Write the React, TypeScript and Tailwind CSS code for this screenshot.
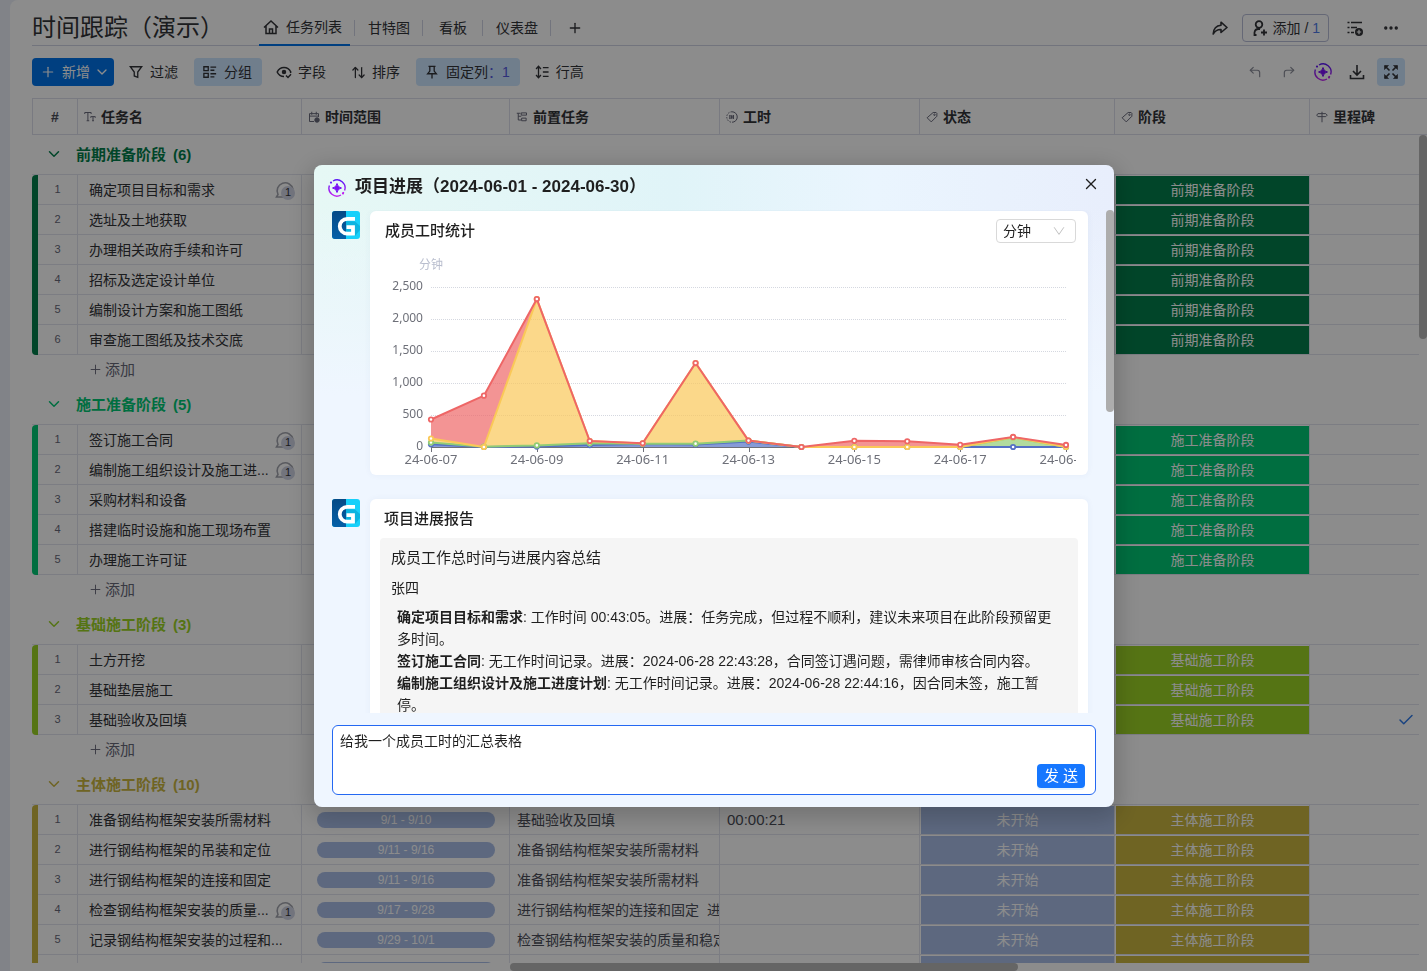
import { type ReactNode } from 'react';
import { ArrowUpDown, Check, ChevronDown, CornerUpLeft, CornerUpRight, Ellipsis, Pin, Plus, X } from 'lucide-react';

type Task = {
    name?: string;
    comments?: number;
    range?: string;
    previous?: string[];
    time?: string;
    status?: string;
    milestone?: boolean;
};

type Group = {
    title: string;
    count: number;
    text: string;
    bg: string;
    tasks: Task[];
};

const groups: Group[] = [
    {
        title: '前期准备阶段',
        count: 6,
        text: 'text-[#037f4c]',
        bg: 'bg-[#037f4c]',
        tasks: [
            { name: '确定项目目标和需求', comments: 1 },
            { name: '选址及土地获取' },
            { name: '办理相关政府手续和许可' },
            { name: '招标及选定设计单位' },
            { name: '编制设计方案和施工图纸' },
            { name: '审查施工图纸及技术交底' },
        ],
    },
    {
        title: '施工准备阶段',
        count: 5,
        text: 'text-[#00c875]',
        bg: 'bg-[#00c875]',
        tasks: [
            { name: '签订施工合同', comments: 1 },
            { name: '编制施工组织设计及施工进...', comments: 1 },
            { name: '采购材料和设备' },
            { name: '搭建临时设施和施工现场布置' },
            { name: '办理施工许可证' },
        ],
    },
    {
        title: '基础施工阶段',
        count: 3,
        text: 'text-[#9cd326]',
        bg: 'bg-[#9cd326]',
        tasks: [
            { name: '土方开挖' },
            { name: '基础垫层施工' },
            { name: '基础验收及回填', milestone: true },
        ],
    },
    {
        title: '主体施工阶段',
        count: 10,
        text: 'text-[#cab641]',
        bg: 'bg-[#cab641]',
        tasks: [
            { name: '准备钢结构框架安装所需材料', range: '9/1 - 9/10', previous: ['基础验收及回填'], time: '00:00:21', status: '未开始' },
            { name: '进行钢结构框架的吊装和定位', range: '9/11 - 9/16', previous: ['准备钢结构框架安装所需材料'], status: '未开始' },
            { name: '进行钢结构框架的连接和固定', range: '9/11 - 9/16', previous: ['准备钢结构框架安装所需材料'], status: '未开始' },
            { name: '检查钢结构框架安装的质量...', comments: 1, range: '9/17 - 9/28', previous: ['进行钢结构框架的连接和固定', '进行钢结构框架的吊装和定位'], status: '未开始' },
            { name: '记录钢结构框架安装的过程和...', range: '9/29 - 10/1', previous: ['检查钢结构框架安装的质量和稳定性'], status: '未开始' },
            { range: ' ', status: ' ' },
        ],
    },
];

const days = ['24-06-07', '24-06-09', '24-06-11', '24-06-13', '24-06-15', '24-06-17', '24-06-19'];

const series = [
    { color: '#5470c6', values: [42, 0, 6, 30, 45, 40, 85, 0, 0, 0, 0, 0, 0] },
    { color: '#91cc75', values: [70, 5, 25, 60, 52, 52, 100, 0, 0, 0, 0, 150, 0] },
    { color: '#fac858', values: [133, 0, 2310, 92, 56, 1310, 100, 0, 0, 0, 0, 152, 0] },
    { color: '#ee6666', values: [430, 802, 2312, 94, 58, 1312, 100, 0, 96, 88, 35, 157, 32] },
];

function Icon({ size = 14, width = 16, stroke = 1.5, className = '', children }: { size?: number; width?: number; stroke?: number; className?: string; children: ReactNode }) {
    return (
        <svg
            width={size}
            height={size}
            viewBox={`0 0 ${width} ${width}`}
            fill="none"
            stroke="currentColor"
            strokeWidth={stroke}
            className={`shrink-0 ${className}`}
            aria-hidden="true"
        >
            {children}
        </svg>
    );
}

function HomeIcon() {
    return (
        <Icon size={16}>
            <path d="M1 8.5 8 2l7 6.5M3 7v7.5h10V7M6.5 14.5V10h3v4.5" />
        </Icon>
    );
}

function SparkIcon() {
    return (
        <svg width="18" height="18" viewBox="0 0 18 18" fill="none" className="shrink-0" aria-hidden="true">
            <defs>
                <linearGradient id="spark" x1="0" y1="0" x2="0" y2="1">
                    <stop offset="0" stopColor="#5b16f5" />
                    <stop offset="1" stopColor="#c026f0" />
                </linearGradient>
            </defs>
            <path d="M5 2A8 8 0 0 1 16.600 11.500M15.800 13.200a8 8 0 0 1-1.200 1.500M13 16A8 8 0 0 1 1.400 6.500" stroke="url(#spark)" strokeWidth="1.400" />
            <circle cx="3" cy="3.600" r="1.100" fill="#6a1af5" />
            <circle cx="15" cy="14.400" r="1.100" fill="#c026f0" />
            <path d="M9 4.500Q9.600 8.400 13.500 9 9.600 9.600 9 13.500 8.400 9.600 4.500 9 8.400 8.400 9 4.500z" fill="#7a12f5" stroke="#7a12f5" strokeWidth="1" />
        </svg>
    );
}

function Logo() {
    return (
        <svg viewBox="0 0 28 28" className="size-7 shrink-0" aria-hidden="true">
            <defs>
                <clipPath id="logo-clip">
                    <rect width="28" height="28" rx="3" />
                </clipPath>
                <linearGradient id="logo-dark" x1="0" y1="0" x2="0" y2="1">
                    <stop offset="0" stopColor="#064a86" />
                    <stop offset="1" stopColor="#0560a8" />
                </linearGradient>
            </defs>
            <g clipPath="url(#logo-clip)">
                <rect width="28" height="28" fill="#17d0fa" />
                <path d="M23 10.500 28 15v4l-5 6-9-3V10z" fill="#0cb4e0" />
                <rect width="14" height="28" fill="url(#logo-dark)" />
                <path d="M23 7.800H15.200a7.400 7.400 0 0 0 0 14.900H21V16.200h-6.500" fill="none" stroke="#fff" strokeWidth="3.800" />
            </g>
        </svg>
    );
}

const tagIcon = (
    <>
        <path d="M9.500 2h4l1 1v4L7 14.500 1.500 9z" />
        <circle cx="11.300" cy="5" r="1" />
    </>
);

const columns = [
    {
        title: '任务名',
        icon: <path d="M1 4V2h8.500v2M5.200 2v11M3.500 13h3.500M9 9V7.500h6V9M12 7.500V13M10.800 13h2.500" />,
    },
    {
        title: '时间范围',
        icon: (
            <>
                <path d="M8 14H2V3.500h12V8M2 6.800h12M5 1v4M11 1v4" />
                <circle cx="12" cy="12" r="3" fill="currentColor" />
            </>
        ),
    },
    {
        title: '前置任务',
        icon: <path d="M1 3h5M3 3v9h4M3 7h4M7 2.500h7v3H7zM7.500 9.500h6v3.500h-6z" />,
    },
    {
        title: '工时',
        icon: (
            <>
                <path d="M8 1a7 7 0 0 1 0 14" />
                <path d="M8 1a7 7 0 0 0 0 14" strokeDasharray="2 1.600" />
                <path d="M5 5.500v5M7.500 5.500v5M10 5.500v5M5 5.500l5 5M5 10.500l5-5" />
            </>
        ),
    },
    { title: '状态', icon: tagIcon },
    { title: '阶段', icon: tagIcon },
    {
        title: '里程碑',
        icon: <path d="M8 1v14M2.500 3.500H13l2 2-2 2H2.500L1 5.500z" />,
    },
];

function ToolButton({ icon, active, children }: { icon: ReactNode; active?: boolean; children: ReactNode }) {
    return (
        <button className={`flex h-7 shrink-0 items-center gap-1.5 rounded pl-2 pr-2.5 ${active ? 'bg-[#cce5ff]' : ''}`}>
            <span className="flex w-4 justify-center">{icon}</span>
            {children}
        </button>
    );
}

function IconButton({ label, className = '', children }: { label: string; className?: string; children: ReactNode }) {
    return (
        <button aria-label={label} className={`flex size-7 shrink-0 items-center justify-center rounded ${className}`}>
            {children}
        </button>
    );
}

function Header() {
    return (
        <header className="ml-[22px] flex h-[46px] shrink-0 items-center border-b border-[#d0d4e4] pt-2.5">
            <h1 className="mr-[35px] w-48 shrink-0 text-2xl leading-9">时间跟踪（演示）</h1>
            <nav className="flex h-9 items-center">
                <a href="#list" className="flex h-9 items-center gap-[7px] border-b-2 border-[#0073ea] pl-1 pr-2">
                    <HomeIcon />
                    任务列表
                </a>
                <a href="#gantt" className="ml-1 border-l border-[#d0d4e4] pl-[13px] pr-3 leading-4">甘特图</a>
                <a href="#board" className="border-l border-[#d0d4e4] pl-4 pr-[15px] leading-4">看板</a>
                <a href="#dashboard" className="border-x border-[#d0d4e4] pl-[13px] pr-3 leading-4">仪表盘</a>
                <IconButton label="添加视图" className="ml-2.5">
                    <Plus size={16} />
                </IconButton>
            </nav>
            <div className="ml-auto flex items-center gap-2 pr-[22px]">
                <IconButton label="分享">
                    <Icon size={16} stroke={1.600}>
                        <path d="M9 2.200 15 7.500 9 12.500V9.500C5.500 9.300 3 11 1.200 14 1.500 9 4 5.500 9 5.200z" strokeLinejoin="round" />
                    </Icon>
                </IconButton>
                <button className="flex h-7 shrink-0 items-center gap-1 rounded border border-[#b8bdd8] px-2">
                    <Icon size={18} width={18} stroke={1.800}>
                        <circle cx="8" cy="5.500" r="3.300" />
                        <path d="M5.500 16H3.500v-2.500a4 4 0 0 1 4-3.500h1.500M13 10.500v6M10 13.500h6" />
                    </Icon>
                    <span>
                        添加 / <span className="text-[#4f7be8]">1</span>
                    </span>
                </button>
                <IconButton label="列表设置" className="ml-1">
                    <Icon size={18} width={18} stroke={1.600}>
                        <path d="M1.500 3.500h2M5 3.500h11M1.500 8.500h2M5 8.500h6M1.500 13.500h2M5 13.500h3" />
                        <circle cx="13" cy="13" r="4" fill="currentColor" stroke="none" />
                        <path d="M13 10.800v4.400M10.800 13h4.400" stroke="#fff" strokeWidth="1.200" />
                    </Icon>
                </IconButton>
                <IconButton label="更多">
                    <Ellipsis size={18} strokeWidth={2.500} />
                </IconButton>
            </div>
        </header>
    );
}

function Toolbar() {
    return (
        <div className="ml-[22px] mt-3 flex h-7 shrink-0 items-center gap-1.5 pr-[22px]">
            <button className="flex h-7 w-[82px] shrink-0 items-center rounded bg-[#0073ea] pl-2 text-white">
                <Plus size={16} strokeWidth={1.800} className="mr-1.5" />
                新增
                <ChevronDown size={16} className="ml-1" />
            </button>
            <ToolButton
                icon={
                    <Icon>
                        <path d="M1.500 2h13l-4.500 6v6l-4-1.500V8z" />
                    </Icon>
                }
            >
                过滤
            </ToolButton>
            <ToolButton
                active
                icon={
                    <Icon>
                        <path d="M1 2h5v4.500H1zM1 9.500h5V14H1zM8.500 2.500H15M8.500 6H13M8.500 10H15M8.500 13.500H13" />
                    </Icon>
                }
            >
                分组
            </ToolButton>
            <ToolButton
                icon={
                    <Icon size={16}>
                        <path d="M8 12.500C4.500 12.500 2.300 10.500 1.200 8 2.500 5.300 5 3.500 8 3.500s5.500 1.800 6.800 4.500l-.5 1" />
                        <circle cx="8" cy="8" r="1.500" fill="currentColor" />
                        <path d="M10 11.500l2 2 3-3.200" />
                    </Icon>
                }
            >
                字段
            </ToolButton>
            <ToolButton icon={<ArrowUpDown size={15} />}>排序</ToolButton>
            <ToolButton
                active
                icon={
                    <Icon size={14}>
                        <path d="M4 1.500h8M5.500 1.500V7L3 10h10l-2.500-3V1.500M8 10v5.500" />
                    </Icon>
                }
            >
                <span>
                    固定列<span className="text-[#5559df]">：1</span>
                </span>
            </ToolButton>
            <ToolButton
                icon={
                    <Icon>
                        <path d="M4 1.500v13M1.200 4.500 4 1.500l2.800 3M1.200 11.500l2.800 3 2.800-3M9 3h6.500M9 8h6.500M9 13h6.500" />
                    </Icon>
                }
            >
                行高
            </ToolButton>
            <div className="ml-auto flex items-center gap-1.5">
                <IconButton label="撤销" className="text-[#8b8d99]">
                    <CornerUpLeft size={14} />
                </IconButton>
                <IconButton label="重做" className="text-[#8b8d99]">
                    <CornerUpRight size={14} />
                </IconButton>
                <IconButton label="智能助手">
                    <SparkIcon />
                </IconButton>
                <IconButton label="下载">
                    <Icon size={16} stroke={1.600}>
                        <path d="M8 1v9.500M4 7l4 4 4-4M1.500 11v3.500h13V11" />
                    </Icon>
                </IconButton>
                <IconButton label="全屏" className="bg-[#cce5ff]">
                    <Icon size={16} stroke={1.600}>
                        <path d="M2 2l4.500 4.500M14 2 9.500 6.500M2 14l4.500-4.500M14 14 9.500 9.500" />
                        <path d="M1.500 1.500H5.500L1.500 5.500zM14.500 1.500V5.500L10.500 1.500zM1.500 14.500V10.500L5.500 14.500zM14.500 14.500H10.500L14.500 10.500z" fill="currentColor" strokeWidth=".6" />
                    </Icon>
                </IconButton>
            </div>
        </div>
    );
}

function CommentBadge({ count }: { count: number }) {
    return (
        <span className="relative mr-1.5 size-5 shrink-0 text-[#a3a5ae]">
            <Icon size={20} width={20} stroke={1.600}>
                <path d="M8 17H1.500L3 14.500A8 8 0 1 1 18 9.500" />
            </Icon>
            <span className="absolute bottom-0 right-0 flex size-3.5 items-center justify-center rounded-full bg-[#d0d4e4] text-[11px] text-[#323338]">
                {count}
            </span>
        </span>
    );
}

function TaskRow({ task, index, group }: { task: Task; index: number; group: Group }) {
    const first = index === 0;
    const last = index === group.tasks.length - 1 && group.tasks.length === group.count;
    const cell = 'border-b border-r border-[#e2e4ee] p-0';

    return (
        <tr>
            <td className="p-0">
                <div className="flex h-[30px]">
                    <div className={`w-1.5 ${group.bg} ${first ? 'rounded-tl' : ''} ${last ? 'rounded-bl' : ''}`} />
                    <div className="flex flex-1 items-center justify-center border-b border-r border-[#e2e4ee] text-[11px] text-[#676879]">
                        {index + 1}
                    </div>
                </div>
            </td>
            <td className={cell}>
                <div className="flex items-center justify-between pl-[11px]">
                    {task.name}
                    {task.comments && <CommentBadge count={task.comments} />}
                </div>
            </td>
            <td className={cell}>
                {task.range && (
                    <div className="ml-[15px] mr-3.5 h-4 rounded-full bg-[#a9bee8] text-center text-xs leading-4 text-white">{task.range}</div>
                )}
            </td>
            <td className={cell}>
                <div className="flex gap-2 overflow-hidden whitespace-nowrap pl-[7px] text-[#4b4e59]">
                    {task.previous?.map((name) => <span key={name}>{name}</span>)}
                </div>
            </td>
            <td className={cell}>
                <div className="pl-[7px] text-[15px] text-[#4b4e59]">{task.time}</div>
            </td>
            <td className={`${cell} pl-px pt-px`}>
                {task.status && <div className="h-7 bg-[#a9bee8] text-center leading-7 text-white">{task.status}</div>}
            </td>
            <td className={`${cell} pl-px pt-px`}>
                <div className={`h-7 text-center leading-7 text-white ${group.bg}`}>{group.title}</div>
            </td>
            <td className={cell}>
                {task.milestone && <Check size={18} className="mx-auto text-[#2f7bea]" />}
            </td>
        </tr>
    );
}

function TaskTable() {
    return (
        <div className="relative ml-[22px] mt-3 min-h-0 flex-1 overflow-hidden">
            <table className="w-[1471px] table-fixed border-separate border-spacing-0">
                <colgroup>
                    <col className="w-[46px]" />
                    <col className="w-[224px]" />
                    <col className="w-[208px]" />
                    <col className="w-[210px]" />
                    <col className="w-[200px]" />
                    <col className="w-[195px]" />
                    <col className="w-[195px]" />
                    <col className="w-[193px]" />
                </colgroup>
                <thead>
                    <tr className="h-[37px]">
                        <th className="border border-[#dcdfec] p-0 font-bold text-[#4b4e59]">#</th>
                        {columns.map((column) => (
                            <th key={column.title} className="border-y border-r border-[#dcdfec] p-0 font-bold">
                                <div className="flex items-center gap-[5px] pl-1.5 pt-px">
                                    <Icon size={12} stroke={1.300} className="text-[#676879]">{column.icon}</Icon>
                                    {column.title}
                                </div>
                            </th>
                        ))}
                    </tr>
                </thead>
                {groups.map((group) => (
                    <tbody key={group.title}>
                        <tr className="h-10">
                            <th colSpan={8} className={`border-b border-[#e2e4ee] p-0 font-bold ${group.text}`}>
                                <button className="ml-[13px] flex items-center text-[15px]">
                                    <ChevronDown size={18} className="mr-[13px]" />
                                    {group.title}
                                    <span className="ml-[7px]">({group.count})</span>
                                </button>
                            </th>
                        </tr>
                        {group.tasks.map((task, index) => (
                            <TaskRow key={index} task={task} index={index} group={group} />
                        ))}
                        <tr className="h-[30px]">
                            <td colSpan={8} className="p-0">
                                <button className="ml-14 flex items-center gap-0.5 text-[15px] text-[#676879]">
                                    <Plus size={15} strokeWidth={1.500} />
                                    添加
                                </button>
                            </td>
                        </tr>
                    </tbody>
                ))}
            </table>
            <div className="absolute bottom-0 right-0 top-[37px] w-2 bg-white">
                <div className="h-[204px] rounded-full bg-[#b8b8b8]" />
            </div>
        </div>
    );
}

// Plot area: 13 days from x=47 to x=682, 0 at y=200, 500 minutes = 32px
const toX = (index: number) => 47 + (index * 635) / 12;
const toY = (value: number) => 200 - (value * 32) / 500;

function HoursChart() {
    return (
        <svg viewBox="0 0 692 220" className="mt-1 block w-full" style={{ fontFamily: '"Noto Sans", "Noto Sans CJK SC", sans-serif' }} role="img" aria-label="成员工时统计图">
            <text x="47" y="22" fontSize="12" textAnchor="middle" fill="#b9bece">分钟</text>
            {[0, 500, 1000, 1500, 2000, 2500].map((value) => (
                <g key={value}>
                    <text x="39" y={toY(value) + 3} fontSize="12" textAnchor="end" fill="#6e7079">{value.toLocaleString('en-US')}</text>
                    {value > 0 && <path d={`M47 ${toY(value) + 0.5}H682`} stroke="#d5d8e0" strokeDasharray="1 1" />}
                </g>
            ))}
            <path d="M47 200.500H682" stroke="#6e7079" />
            {days.map((day, index) => (
                <g key={day}>
                    <path d={`M${Math.round(toX(index * 2)) + 0.5} 200v5`} stroke="#6e7079" />
                    <text x={toX(index * 2)} y="217" fontSize="13" textAnchor="middle" fill="#6e7079">{day}</text>
                </g>
            ))}
            {series.map(({ color, values }, s) => {
                const top = values.map((value, i) => `${toX(i)},${toY(value)}`);
                const below = s > 0 ? series[s - 1].values : values.map(() => 0);
                const bottom = below.map((value, i) => `${toX(i)},${toY(value)}`).reverse();
                return <polygon key={color} points={[...top, ...bottom].join(' ')} fill={color} fillOpacity="0.7" />;
            })}
            {series.map(({ color, values }) => (
                <g key={color} stroke={color} strokeWidth="2">
                    <polyline points={values.map((value, i) => `${toX(i)},${toY(value)}`).join(' ')} fill="none" strokeLinejoin="bevel" />
                    {values.map((value, i) => <circle key={i} cx={toX(i)} cy={toY(value)} r="2.200" fill="#fff" strokeWidth="1.800" />)}
                </g>
            ))}
        </svg>
    );
}

function ProgressDialog() {
    return (
        <div className="fixed inset-0 flex items-center justify-center bg-black/45 pl-px pt-px">
            <div
                role="dialog"
                aria-labelledby="dialog-title"
                className="flex h-[642px] max-h-full w-full max-w-[800px] flex-col rounded-lg bg-[linear-gradient(to_bottom,rgba(239,246,255,0)_40px,#eff6ff_230px),linear-gradient(to_right,#e6f8f5,#e0f4f8_45%,#eaf5fe_70%,#e8eefc)] text-[#1f1f1f] shadow-[0_6px_24px_4px_rgba(0,0,0,0.2)]"
            >
                <div className="flex h-[45px] shrink-0 items-center pl-3.5 pr-2">
                    <SparkIcon />
                    <h2 id="dialog-title" className="ml-[9px] text-[17px] font-bold">项目进展（2024-06-01 - 2024-06-30）</h2>
                    <button aria-label="关闭" className="ml-auto flex h-[38px] w-[30px] items-center justify-center self-start">
                        <X size={18} strokeWidth={1.800} />
                    </button>
                </div>

                <div className="flex min-h-0 flex-1 justify-between overflow-hidden pl-[18px]">
                    <div className="flex-1 space-y-6 pt-px">
                        <div className="flex gap-2.5">
                            <Logo />
                            <section className="flex-1 rounded-md bg-white pb-2 pl-3.5 pr-3 pt-2 shadow-[0_0_6px_rgba(60,90,160,0.06)]">
                                <div className="flex h-6 items-center justify-between">
                                    <h3 className="pl-px text-[15px] font-medium">成员工时统计</h3>
                                    <div className="relative">
                                        <select aria-label="时间单位" className="h-6 w-20 appearance-none rounded border border-[#d9d9d9] bg-white pl-1.5 text-sm leading-none">
                                            <option>分钟</option>
                                        </select>
                                        <Icon size={12} stroke={1.300} className="pointer-events-none absolute right-[11px] top-1.5 text-[#bfbfbf]">
                                            <path d="M1.500 3 8 12.500 14.500 3" />
                                        </Icon>
                                    </div>
                                </div>
                                <HoursChart />
                            </section>
                        </div>

                        <div className="flex gap-2.5">
                            <Logo />
                            <section className="flex-1 rounded-md bg-white px-2.5 shadow-[0_0_6px_rgba(60,90,160,0.06)]">
                                <h3 className="h-[39px] pl-1 text-[15px] font-medium leading-[39px]">项目进展报告</h3>
                                <div className="rounded bg-[#f5f5f5] pb-4 pl-[11px] pr-5 pt-2">
                                    <p className="text-[15px] leading-6">成员工作总时间与进展内容总结</p>
                                    <p className="mt-[7px] leading-[22px]">张四</p>
                                    <ul className="mt-[7px] pl-1.5 leading-[22px]">
                                        <li>
                                            <strong>确定项目目标和需求</strong>: 工作时间 00:43:05。进展：任务完成，但过程不顺利，建议未来项目在此阶段预留更多时间。
                                        </li>
                                        <li>
                                            <strong>签订施工合同</strong>: 无工作时间记录。进展：2024-06-28 22:43:28，合同签订遇问题，需律师审核合同内容。
                                        </li>
                                        <li>
                                            <strong>编制施工组织设计及施工进度计划</strong>: 无工作时间记录。进展：2024-06-28 22:44:16，因合同未签，施工暂停。
                                        </li>
                                    </ul>
                                </div>
                            </section>
                        </div>
                    </div>
                    <div className="ml-[18px] h-[202px] w-2 shrink-0 rounded-full bg-[#adadad]" />
                </div>

                <form className="mx-[18px] mb-3 mt-3 flex h-[70px] shrink-0 flex-col rounded-md border border-[#2468f2] bg-white pb-1.5 pl-[7px] pr-2.5 pt-1">
                    <textarea
                        aria-label="消息"
                        defaultValue="给我一个成员工时的汇总表格"
                        className="min-h-0 w-full flex-1 resize-none overflow-hidden leading-[22px] outline-none"
                    />
                    <button type="button" className="h-6 w-12 shrink-0 self-end rounded bg-[#1677ff] text-[15px] leading-6 text-white shadow-[0_2px_0_rgba(5,145,255,0.1)]">
                        发 送
                    </button>
                </form>
            </div>
        </div>
    );
}

export default function App() {
    return (
        <div
            className="h-screen overflow-hidden bg-[#eceff8] pl-2.5 text-sm text-[#323338]"
            style={{ fontFamily: '"Liberation Sans", "Noto Sans CJK SC", sans-serif' }}
        >
            <div className="flex h-full flex-col rounded-tl-lg bg-white">
                <Header />
                <Toolbar />
                <TaskTable />
                <div className="ml-[500px] mr-[409px] h-2 shrink-0 rounded-full bg-[#b8b8b8]" />
            </div>
            <ProgressDialog />
        </div>
    );
}
